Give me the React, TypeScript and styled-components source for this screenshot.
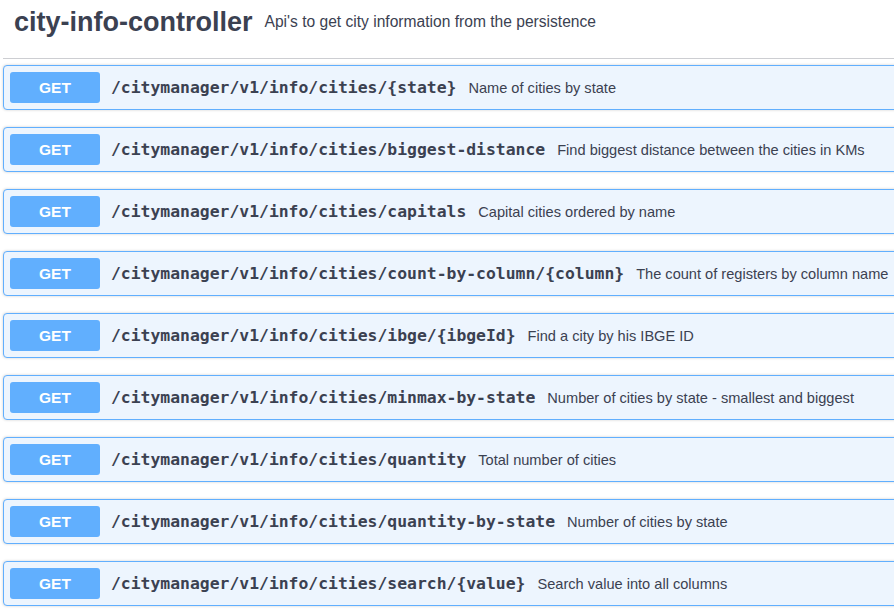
import React from "react";
import styled, { createGlobalStyle } from "styled-components";

const Global = createGlobalStyle`
  html, body { margin: 0; padding: 0; background: #ffffff; overflow: hidden; }
  body { font-family: "Liberation Sans", Arial, sans-serif; color: #3b4151; }
`;

const Page = styled.div`
  width: 1000px;
  padding-left: 3px;
`;

const TagHeader = styled.div`
  display: flex;
  align-items: center;
  padding: 6px 0 20px 11px;
  border-bottom: 1px solid #cdced2;
  margin-bottom: 6px;
`;

const TagTitle = styled.h4`
  margin: 0;
  font-family: "Liberation Sans", Arial, sans-serif;
  font-weight: 700;
  font-size: 27px;
  line-height: 32px;
  color: #3b4151;
`;

const TagDesc = styled.small`
  font-family: "Liberation Sans", Arial, sans-serif;
  font-size: 15.6px;
  color: #3b4151;
  margin-left: 12px;
`;

const OpBlock = styled.div`
  display: flex;
  align-items: center;
  height: 45px;
  box-sizing: border-box;
  padding: 6px 0 6px 6px;
  margin-bottom: 17px;
  border: 1px solid #61affe;
  border-radius: 4px;
  background: #edf5fe;
  box-shadow: 0 0 3px rgba(0, 0, 0, 0.19);
`;

const Method = styled.span`
  display: flex;
  align-items: center;
  justify-content: center;
  width: 90px;
  height: 31px;
  flex: none;
  border-radius: 3px;
  background: #61affe;
  color: #ffffff;
  font-family: "Liberation Sans", Arial, sans-serif;
  font-weight: 700;
  font-size: 15.5px;
`;

const Path = styled.span`
  margin-left: 11px;
  font-family: "DejaVu Sans Mono", monospace;
  font-weight: 700;
  font-size: 16.4px;
  color: #3b4151;
  white-space: nowrap;
`;

const Desc = styled.span`
  margin-left: 12px;
  font-family: "Liberation Sans", Arial, sans-serif;
  font-size: 14.6px;
  color: #3b4151;
  white-space: nowrap;
`;

const ops: [string, string][] = [
  ["/citymanager/v1/info/cities/{state}", "Name of cities by state"],
  ["/citymanager/v1/info/cities/biggest-distance", "Find biggest distance between the cities in KMs"],
  ["/citymanager/v1/info/cities/capitals", "Capital cities ordered by name"],
  ["/citymanager/v1/info/cities/count-by-column/{column}", "The count of registers by column name"],
  ["/citymanager/v1/info/cities/ibge/{ibgeId}", "Find a city by his IBGE ID"],
  ["/citymanager/v1/info/cities/minmax-by-state", "Number of cities by state - smallest and biggest"],
  ["/citymanager/v1/info/cities/quantity", "Total number of cities"],
  ["/citymanager/v1/info/cities/quantity-by-state", "Number of cities by state"],
  ["/citymanager/v1/info/cities/search/{value}", "Search value into all columns"],
];

export default function App() {
  return (
    <>
      <Global />
      <Page>
        <TagHeader>
          <TagTitle>city-info-controller</TagTitle>
          <TagDesc>Api's to get city information from the persistence</TagDesc>
        </TagHeader>
        {ops.map(([p, d]) => (
          <OpBlock key={p}>
            <Method>GET</Method>
            <Path>{p}</Path>
            <Desc>{d}</Desc>
          </OpBlock>
        ))}
      </Page>
    </>
  );
}
